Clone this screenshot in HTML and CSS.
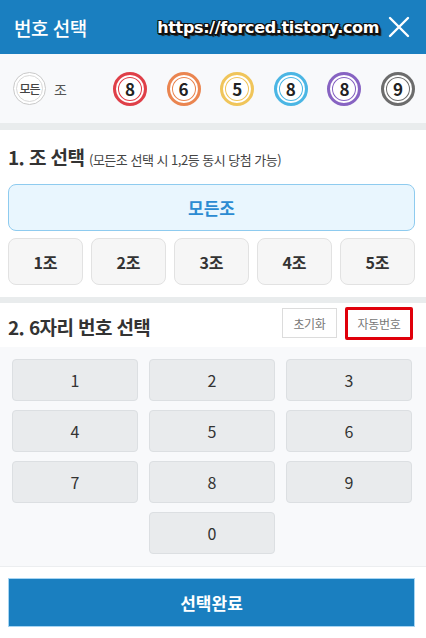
FILE: index.html
```html
<!DOCTYPE html>
<html lang="ko">
<head>
    <meta charset="UTF-8">
    <meta name="viewport" content="width=device-width, initial-scale=1.0">
    <title>번호 선택</title>
    <link rel="stylesheet" href="styles.css">
</head>
<body>
    <div class="sheet">
        <header class="top">
            <span class="top-title">번호 선택</span>
            <span class="watermark">https://forced.tistory.com</span>
            <button class="close" aria-label="닫기">
                <svg width="22" height="22" viewBox="0 0 22 22">
                    <path d="M2 2 L20 20 M20 2 L2 20" stroke="#fff" stroke-width="2.4" stroke-linecap="round" fill="none"/>
                </svg>
            </button>
        </header>

        <!-- current pick -->
        <div class="picked">
            <div class="all-badge"><span>모든</span></div>
            <span class="jo">조</span>
            <div class="balls">
                <span class="ball red">8</span>
                <span class="ball orange">6</span>
                <span class="ball yellow">5</span>
                <span class="ball blue">8</span>
                <span class="ball purple">8</span>
                <span class="ball gray">9</span>
            </div>
        </div>

        <div class="divider"></div>

        <section class="group-select">
            <p class="title">1. 조 선택 <small>(모든조 선택 시 1,2등 동시 당첨 가능)</small></p>
            <button class="all-groups">모든조</button>
            <div class="groups">
                <button class="group">1조</button>
                <button class="group">2조</button>
                <button class="group">3조</button>
                <button class="group">4조</button>
                <button class="group">5조</button>
            </div>
        </section>

        <div class="divider thin"></div>

        <section class="number-select">
            <div class="number-head">
                <p class="title">2. 6자리 번호 선택</p>
                <div class="tools">
                    <button class="tool">초기화</button>
                    <button class="tool marked">자동번호</button>
                </div>
            </div>
            <div class="keypad">
                <button class="key">1</button>
                <button class="key">2</button>
                <button class="key">3</button>
                <button class="key">4</button>
                <button class="key">5</button>
                <button class="key">6</button>
                <button class="key">7</button>
                <button class="key">8</button>
                <button class="key">9</button>
                <button class="key zero">0</button>
            </div>
        </section>

        <div class="bottom">
            <button class="done">선택완료</button>
        </div>
    </div>
</body>
</html>
```

FILE: styles.css
```css
/* base */
html, body {
    margin: 0;
    padding: 0;
    background: #fff;
    font-family: "Noto Sans CJK KR", "Noto Sans", sans-serif;
    color: #333;
}

button {
    font-family: inherit;
    cursor: pointer;
}

p {
    margin: 0;
}

.sheet {
    width: 426px;
    height: 638px;
    display: flex;
    flex-direction: column;
}

/* header bar */
.top {
    height: 54px;
    flex-shrink: 0;
    background-color: #1a7fc0;
    display: flex;
    align-items: center;
    padding: 0 16px 0 14px;
}

.top-title {
    color: #fff;
    font-size: 19px;
    font-weight: 500;
    letter-spacing: -0.5px;
}

.watermark {
    margin-left: auto;
    margin-right: 9px;
    color: #fff;
    font-family: "DejaVu Sans", sans-serif;
    font-weight: bold;
    font-size: 16px;
    letter-spacing: -0.35px;
    text-shadow: 1px 1px 0 #111, -1px -1px 0 #111, 1px -1px 0 #111, -1px 1px 0 #111,
                 2px 2px 0 #111, 0 2px 0 #111, 2px 0 0 #111, 3px 3px 1px #222;
}

.close {
    border: none;
    background: none;
    padding: 0;
    width: 22px;
    height: 22px;
    display: flex;
}

/* picked numbers row */
.picked {
    height: 69px;
    flex-shrink: 0;
    background-color: #f8f9fb;
    display: flex;
    align-items: center;
    padding: 0 11px 0 13px;
}

.all-badge {
    width: 33px;
    height: 33px;
    border-radius: 50%;
    border: 1px solid #c9c9c9;
    box-sizing: border-box;
    display: flex;
    align-items: center;
    justify-content: center;
    background: #fff;
}

.all-badge span {
    width: 27px;
    height: 27px;
    border-radius: 50%;
    border: 1px solid #d8d8d8;
    box-sizing: border-box;
    display: flex;
    align-items: center;
    justify-content: center;
    font-size: 12px;
    font-weight: 500;
    color: #444;
    letter-spacing: -1px;
}

.jo {
    margin-left: 8px;
    font-size: 14px;
    color: #555;
}

.balls {
    margin-left: auto;
    display: flex;
    gap: 19.6px;
}

.ball {
    width: 34px;
    height: 34px;
    box-sizing: border-box;
    border-radius: 50%;
    border: 3px solid currentColor;
    background: #fff;
    box-shadow: inset 0 0 0 2px #fff, inset 0 0 0 3px currentColor;
    display: flex;
    align-items: center;
    justify-content: center;
    font-size: 17px;
    font-weight: bold;
    -webkit-text-fill-color: #222;
}

.red { color: #df3f48; }
.orange { color: #ea8550; }
.yellow { color: #f0c55a; }
.blue { color: #4bb6e4; }
.purple { color: #8763c2; }
.gray { color: #6c6c6c; }

.divider {
    height: 7px;
    flex-shrink: 0;
    background-color: #e9eced;
}

.divider.thin {
    height: 6px;
}

/* section 1 */
.group-select {
    background: #fff;
    padding: 13px 11px 12px 8px;
}

.title {
    font-size: 19px;
    font-weight: bold;
    color: #333;
    letter-spacing: -0.6px;
    line-height: 28px;
}

.title small {
    font-size: 13px;
    font-weight: normal;
    color: #444;
    letter-spacing: -0.5px;
}

.all-groups {
    display: block;
    width: 100%;
    height: 47px;
    margin-top: 10px;
    border: 1px solid #8ecbef;
    border-radius: 8px;
    background-color: #e9f6fe;
    color: #2b8bd2;
    font-size: 17px;
    font-weight: bold;
}

.groups {
    display: flex;
    gap: 8px;
    margin-top: 7px;
}

.group {
    flex: 1;
    height: 47px;
    border: 1px solid #e2e2e2;
    border-radius: 8px;
    background-color: #f6f6f6;
    color: #333;
    font-size: 16px;
    font-weight: bold;
}

/* section 2 */
.number-select {
    flex: 1;
    display: flex;
    flex-direction: column;
}

.number-head {
    height: 44px;
    flex-shrink: 0;
    background: #fff;
    display: flex;
    align-items: center;
    justify-content: space-between;
    padding: 0 13px 0 8px;
}

.number-head .title {
    margin-top: 4px;
}

.tools {
    display: flex;
    gap: 8px;
    align-self: flex-start;
    margin-top: 5px;
}

.tool {
    width: 55px;
    height: 30px;
    padding: 0;
    border: 1px solid #dcdcdc;
    background: #fff;
    color: #777;
    font-size: 12px;
    letter-spacing: -0.3px;
}

.tool.marked {
    width: 68px;
    height: 33px;
    margin-top: -1px;
    border: 3px solid #e0000b;
    border-radius: 2px;
}

.keypad {
    flex: 1;
    background-color: #f8f9fb;
    border-bottom: 1px solid #eceef0;
    display: grid;
    grid-template-columns: repeat(3, 1fr);
    grid-auto-rows: 42px;
    gap: 9px 11px;
    padding: 12px 14px 11px 12px;
}

.key {
    border: 1px solid #dcdfe2;
    border-radius: 4px;
    background-color: #e9ebed;
    color: #333;
    font-size: 16px;
}

.zero {
    grid-column: 2;
}

/* bottom action */
.bottom {
    background: #fff;
    padding: 11px 11px 11px 8px;
}

.done {
    display: block;
    width: 100%;
    height: 49px;
    border: 1px solid #a6d5f3;
    background-color: #1a7fc0;
    color: #fff;
    font-size: 17px;
    font-weight: bold;
}
```
